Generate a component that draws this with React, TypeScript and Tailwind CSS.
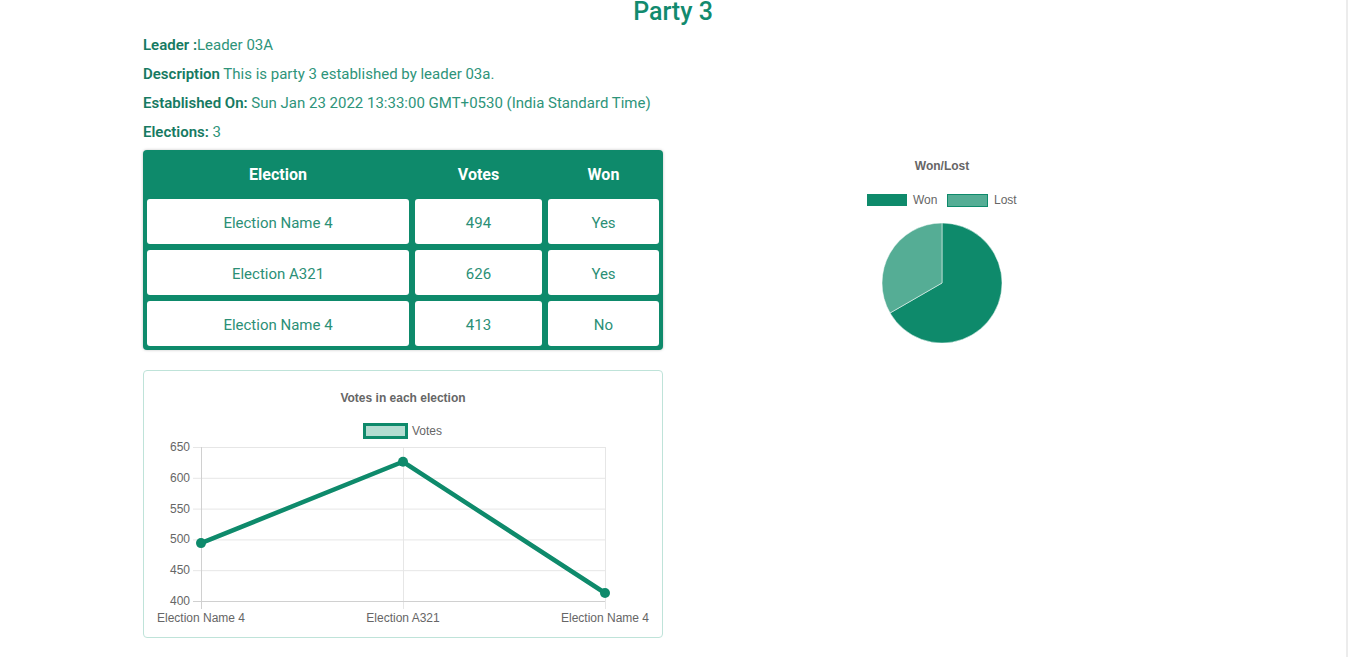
import React from "react";

const rows = [
  { name: "Election Name 4", votes: 494, won: "Yes" },
  { name: "Election A321", votes: 626, won: "Yes" },
  { name: "Election Name 4", votes: 413, won: "No" },
];

const GREEN = "#0e8a6b";

// y position in the line chart for a vote value (400..650 -> 230..76)
function vy(v: number) {
  return 230 - ((v - 400) / 250) * 154;
}

function VotesChart() {
  const xs = [57, 259, 461];
  const ticks = [650, 600, 550, 500, 450, 400];
  const pts = rows.map((r, i) => `${xs[i]},${vy(r.votes)}`).join(" ");
  return (
    <svg width="520" height="268" viewBox="0 0 520 268" className="block">
      <text x="259" y="31" textAnchor="middle" fontSize="12" fontWeight="700" fill="#666" fontFamily="'Liberation Sans', Arial, sans-serif">
        Votes in each election
      </text>
      {/* legend */}
      <rect x="220.5" y="53.5" width="42" height="13" fill="#b3ddd1" stroke={GREEN} strokeWidth="3" />
      <text x="268" y="64" fontSize="12" fill="#666" fontFamily="'Liberation Sans', Arial, sans-serif">
        Votes
      </text>
      {/* grid */}
      {ticks.map((t) => (
        <g key={t}>
          <line x1="49" x2="461" y1={vy(t) + 0.5} y2={vy(t) + 0.5} stroke="#e6e6e6" />
          <text x="46" y={vy(t) + 4} textAnchor="end" fontSize="12" fill="#666" fontFamily="'Liberation Sans', Arial, sans-serif">
            {t}
          </text>
        </g>
      ))}
      {xs.map((x) => (
        <line key={x} x1={x + 0.5} x2={x + 0.5} y1="76" y2="238" stroke="#e6e6e6" />
      ))}
      <line x1="57.5" x2="57.5" y1="76" y2="238" stroke="#d0d0d0" />
      <line x1="49" x2="461" y1="230.5" y2="230.5" stroke="#d0d0d0" />
      {rows.map((r, i) => (
        <text key={i} x={xs[i]} y="251" textAnchor="middle" fontSize="12" fill="#666" fontFamily="'Liberation Sans', Arial, sans-serif">
          {r.name}
        </text>
      ))}
      <polyline points={pts} fill="none" stroke={GREEN} strokeWidth="4.5" strokeLinejoin="miter" />
      {rows.map((r, i) => (
        <circle key={i} cx={xs[i]} cy={vy(r.votes)} r="5" fill={GREEN} />
      ))}
    </svg>
  );
}

function PieChart() {
  return (
    <svg width="200" height="200" viewBox="0 0 200 200" className="block">
      <text x="100" y="20" textAnchor="middle" fontSize="12" fontWeight="700" fill="#666" fontFamily="'Liberation Sans', Arial, sans-serif">
        Won/Lost
      </text>
      <rect x="25" y="44" width="40" height="12" fill={GREEN} />
      <text x="71" y="54" fontSize="12" fill="#666" fontFamily="'Liberation Sans', Arial, sans-serif">
        Won
      </text>
      <rect x="105.5" y="44.5" width="40" height="12" fill="#55ad95" stroke={GREEN} strokeWidth="1" />
      <text x="152" y="54" fontSize="12" fill="#666" fontFamily="'Liberation Sans', Arial, sans-serif">
        Lost
      </text>
      <path d="M100,133 L100,73 A60,60 0 1 1 48.04,163 Z" fill={GREEN} stroke="#fff" strokeWidth="0.5" />
      <path d="M100,133 L48.04,163 A60,60 0 0 1 100,73 Z" fill="#55ad95" stroke="#fff" strokeWidth="0.5" />
    </svg>
  );
}

export default function App() {
  return (
    <div className="h-[657px] overflow-hidden border-r-2 border-[#ececec] bg-white font-['Roboto',sans-serif]">
      <h1 className="text-center text-[25px] leading-[24px] font-medium text-[#128a6e]">Party 3</h1>

      <div className="flex">
        <div className="ml-[143px] w-[520px]">
          <div className="mt-[7px] text-[15px] leading-[29px] text-[#2e947a]">
            <p>
              <span className="font-semibold text-[#167a62]">Leader :</span>Leader 03A
            </p>
            <p>
              <span className="font-semibold text-[#167a62]">Description</span> This is party 3 established by leader 03a.
            </p>
            <p>
              <span className="font-semibold text-[#167a62]">Established On:</span> Sun Jan 23 2022 13:33:00 GMT+0530 (India Standard Time)
            </p>
            <p>
              <span className="font-semibold text-[#167a62]">Elections:</span> 3
            </p>
          </div>

          {/* Elections table */}
          <div className="mt-[3px] rounded-[4px] bg-[#0e8a6b] px-[4px] pb-[4px] shadow-[0_0_3px_rgba(0,0,0,0.25)]">
            <div className="flex h-[49px] items-center gap-[6px] text-[16px] font-bold text-white">
              <div className="w-[262px] text-center">Election</div>
              <div className="w-[127px] text-center">Votes</div>
              <div className="w-[111px] text-center">Won</div>
            </div>
            <div className="flex flex-col gap-[6px]">
              {rows.map((r, i) => (
                <div key={i} className="flex gap-[6px] text-[15px] text-[#2b8f76]">
                  <div className="flex h-[45px] w-[262px] items-center justify-center rounded-[3px] bg-white pt-[3px]">{r.name}</div>
                  <div className="flex h-[45px] w-[127px] items-center justify-center rounded-[3px] bg-white pt-[3px]">{r.votes}</div>
                  <div className="flex h-[45px] w-[111px] items-center justify-center rounded-[3px] bg-white pt-[3px]">{r.won}</div>
                </div>
              ))}
            </div>
          </div>

          {/* Votes line chart */}
          <div className="mt-[20px] h-[268px] w-[520px] overflow-hidden rounded-[4px] border border-[#bfe3d9]">
            <VotesChart />
          </div>
        </div>

        <div className="flex w-[558px] justify-center pt-[126px]">
          <PieChart />
        </div>
      </div>
    </div>
  );
}
